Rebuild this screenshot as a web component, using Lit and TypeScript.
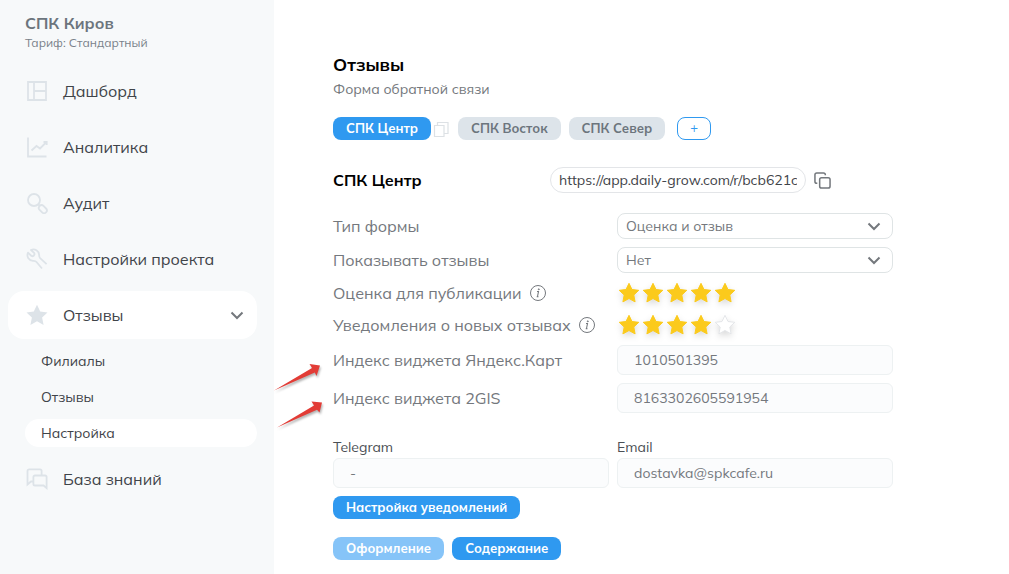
import { LitElement, html, css, svg } from "lit";
import { customElement, property, state } from "lit/decorators.js";
import { classMap } from "lit/directives/class-map.js";

const FONT = css`"Mulish", "Open Sans", "Noto Sans", sans-serif`;

const icons = {
  dashboard: svg`<path d="M2 2h18v18H2zM8 2v18M8 11h12"/>`,
  chart: svg`<path d="M2 1.500v19h18.500M5.500 14.500l5-4.500 3.500 2.500 6-6M17.500 6h3.200v3"/>`,
  audit: svg`<circle cx="8" cy="8" r="6"/><path d="M12.500 12.500l1.500 1.500"/><rect x="12.500" y="14.500" width="9" height="5.500" rx="2.700" transform="rotate(45 17 17)"/>`,
  wrench: svg`<path stroke-linejoin="round" d="M16 20.500l-5.500-6.500c-1-1.200-2-1-3.500-1.100C3 12.500.2 9 2 4.700L5.500 8c1.700.8 3.600-1.200 2.800-2.800L5 2c4-1.800 7.800 1 8.100 4.700.1 1.500 0 2.500 1 3.500l6.500 6"/>`,
  star: svg`<path class="solid" d="M11 .8l3.200 6.800 7.300.8-5.400 5.100 1.500 7.400-6.600-3.600-6.600 3.600 1.500-7.400L.5 8.400l7.300-.8z"/>`,
  chat: svg`<path d="M6.500 13.500H5l-3.500 3V3c0-1 .6-1.600 1.600-1.600H14c1 0 1.600.6 1.600 1.600v3.500M9 7.500h10c1 0 1.600.6 1.600 1.600v11l-3-2.600H9c-1 0-1.600-.6-1.600-1.600V9.100C7.400 8.100 8 7.500 9 7.500z"/>`,
};

const chevron = svg`<path d="M1.500 1.500L7 7l5.500-5.500"/>`;

const arrows = {
  yandex: "M1 30.500L39 8 36.500 4 47 5.500 43.500 16 41.800 12.500z",
  gis: "M4 29.500L41 7.500 38.500 3.500 49 4.500 46.500 14.500 44 11.800z",
};

@customElement("nav-item")
class NavItem extends LitElement {
  @property() icon: keyof typeof icons = "dashboard";
  @property() label = "";
  @property({ type: Boolean }) open = false;

  static styles = css`
    :host { display: block; font-family: ${FONT}; }
    .link {
      display: flex; align-items: center; gap: 15px; height: 48px;
      padding: 0 13px 0 18px; border-radius: 16px;
      color: #3f4449; font-size: 16px; text-decoration: none;
    }
    .open { background: #fff; }
    .label { flex: 1; }
    .icon { width: 22px; height: 22px; fill: none; stroke: #dde3e8; stroke-width: 1.8; }
    .solid { fill: #dde3e8; stroke: none; }
    .chevron { width: 14px; height: 9px; fill: none; stroke: #74787d; stroke-width: 2; }
  `;

  render() {
    return html`<a class=${classMap({ link: true, open: this.open })} href="#">
      <svg class="icon" viewBox="0 0 22 22" aria-hidden="true">${icons[this.icon]}</svg>
      <span class="label">${this.label}</span>
      ${this.open ? html`<svg class="chevron" viewBox="0 0 14 9" aria-hidden="true">${chevron}</svg>` : null}
    </a>`;
  }
}

@customElement("star-rating")
class StarRating extends LitElement {
  @property({ type: Number }) value = 0;
  @property() label = "";

  static styles = css`
    :host { display: block; }
    .stars { display: flex; border: 0; margin: 0; padding: 0; }
    .star { display: block; position: relative; width: 24px; height: 24px; cursor: pointer; }
    .radio { position: absolute; inset: 0; margin: 0; opacity: 0; }
    .shape { display: block; width: 24px; height: 24px; overflow: visible; fill: #fff; stroke: #e3e5e8; filter: drop-shadow(0 3px 3px rgb(0 0 0 / 14%)); }
    .on { fill: #fbca1c; stroke: #fbca1c; }
  `;

  render() {
    return html`<fieldset class="stars" aria-label=${this.label}>
      ${[1, 2, 3, 4, 5].map((n) => html`<label class="star">
        <input class="radio" type="radio" name="rate" aria-label=${n} .checked=${n === this.value} @change=${() => (this.value = n)}>
        <svg class=${classMap({ shape: true, on: n <= this.value })} viewBox="0 0 24 24" aria-hidden="true">
          <path stroke-linejoin="round" d="M12 2.300l3 6.200 6.800.8-5 4.700 1.300 6.900-6.100-3.400-6.100 3.400 1.300-6.900-5-4.700 6.800-.8z"/>
        </svg>
      </label>`)}
    </fieldset>`;
  }
}

@customElement("app-root")
class AppRoot extends LitElement {
  @state() private branch = "СПК Центр";

  static styles = css`
    :host { display: flex; min-height: 100vh; background: #fff; font-family: ${FONT}; color: #74787d; }
    * { box-sizing: border-box; }
    button, input, select { font-family: inherit; margin: 0; }
    h1, h2, p { margin: 0; }

    .sidebar { flex: 0 0 274px; padding: 13px 17px 16px 8px; background: #f7f9fa; }
    .account { padding-left: 17px; margin-bottom: 14px; }
    .account-name { font-size: 16px; line-height: 20px; font-weight: 700; color: #6c757d; }
    .account-plan { font-size: 12px; line-height: 20px; color: #7a828a; }
    .nav { display: grid; gap: 8px; }
    .subnav { display: grid; gap: 8px; padding-left: 17px; }
    .sublink { height: 28px; padding: 0 16px; border-radius: 14px; font-size: 14px; line-height: 28px; color: #3f4449; text-decoration: none; }
    .current { background: #fff; }

    .main { flex: 1; min-width: 0; padding: 53px 59px 15px; }
    .content { max-width: 560px; }
    .title { font-size: 18px; line-height: 24px; font-weight: 700; color: #000; }
    .subtitle { font-size: 14px; line-height: 24px; }

    .tabs { display: flex; align-items: center; gap: 8px; margin-top: 16px; }
    .tab-group { display: flex; align-items: center; gap: 2px; margin-right: 1px; }
    .button { height: 23px; padding: 0 13px; border: 0; border-radius: 8px; font-size: 13px; line-height: 23px; font-weight: 700; background: #2f99f0; color: #fff; white-space: nowrap; }
    .idle { background: #dde4ea; color: #6c757d; }
    .faded { background: #86c4f8; }
    .add { width: 34px; padding: 0; margin-left: 4px; border: 1px solid #2f99f0; background: #fff; color: #2f99f0; font-weight: 400; line-height: 21px; }
    .icon-button { display: block; padding: 0; border: 0; background: none; }
    .duplicate { display: block; width: 16px; height: 16px; fill: none; stroke: #dde1e5; stroke-width: 1.200; }
    .copy { display: block; width: 17px; height: 17px; fill: none; stroke: #74787d; stroke-width: 1.600; }

    .branch { display: flex; align-items: center; margin-top: 27px; }
    .branch-name { flex: 0 0 217px; font-size: 16px; line-height: 24px; font-weight: 700; color: #000; }
    .url { width: 256px; height: 26px; padding: 0 8px; border: 1px solid #e3e5e8; border-radius: 13px; font-size: 14px; color: #3f4449; margin-right: 8px; }

    .settings { display: grid; gap: 8px; margin-top: 20px; }
    .row { position: relative; display: grid; grid-template-columns: 1fr 276px; column-gap: 8px; align-items: center; }
    .label { display: flex; align-items: center; gap: 8px; font-size: 16px; line-height: 20px; white-space: nowrap; }
    .info { width: 16px; height: 16px; fill: none; stroke: #74787d; }
    .picker { display: grid; align-items: center; }
    .select { grid-area: 1 / 1; width: 100%; height: 26px; padding: 0 8px; border: 1px solid #dfe4e5; border-radius: 8px; appearance: none; background: #fff; font-size: 14px; color: #74787d; }
    .chevron { grid-area: 1 / 1; justify-self: end; margin-right: 12px; width: 14px; height: 9px; fill: none; stroke: #74787d; stroke-width: 2; pointer-events: none; }
    .field { width: 100%; height: 30px; padding: 0 16px; border: 1px solid #edf1f2; border-radius: 6px; background: #fbfcfd; font-size: 14px; color: #74787d; }
    .arrow { position: absolute; right: 100%; top: 50%; width: 60px; height: 40px; overflow: visible; fill: #e23c36; filter: drop-shadow(1px 2px 1px rgb(0 0 0 / 30%)); }

    .contacts { display: grid; grid-template-columns: 1fr 1fr; gap: 8px; margin-top: 24px; }
    .contact { display: grid; font-size: 14px; line-height: 21px; color: #4b5055; }
    .actions { display: flex; gap: 8px; margin-top: 8px; }
    .actions + .actions { margin-top: 18px; }
  `;

  private info = html`<svg class="info" viewBox="0 0 16 16" aria-hidden="true">
    <circle cx="8" cy="8" r="7.500"/><path d="M7 6.500h1.500L7.500 11.500M6.700 11.800h1.800" stroke-width="1.100"/><circle cx="8.800" cy="4.300" r=".5" fill="#74787d"/>
  </svg>`;

  private picker(id: string, label: string, options: string[]) {
    return html`<div class="row">
      <label class="label" for=${id}>${label}</label>
      <div class="picker">
        <select class="select" id=${id}>${options.map((o) => html`<option>${o}</option>`)}</select>
        <svg class="chevron" viewBox="0 0 14 9" aria-hidden="true">${chevron}</svg>
      </div>
    </div>`;
  }

  private rating(label: string, value: number) {
    return html`<div class="row">
      <div class="label">${label}${this.info}</div>
      <star-rating .label=${label} .value=${value}></star-rating>
    </div>`;
  }

  private widget(id: keyof typeof arrows, label: string, value: string) {
    return html`<div class="row">
      <svg class="arrow" viewBox="0 0 60 40" aria-hidden="true"><path d=${arrows[id]}/></svg>
      <label class="label" for=${id}>${label}</label>
      <input class="field" id=${id} .value=${value}>
    </div>`;
  }

  private tab(name: string) {
    return html`<button class=${classMap({ button: true, idle: name !== this.branch })} @click=${() => (this.branch = name)}>${name}</button>`;
  }

  render() {
    return html`
      <aside class="sidebar">
        <div class="account">
          <div class="account-name">СПК Киров</div>
          <div class="account-plan">Тариф: Стандартный</div>
        </div>
        <nav class="nav">
          <nav-item icon="dashboard" label="Дашборд"></nav-item>
          <nav-item icon="chart" label="Аналитика"></nav-item>
          <nav-item icon="audit" label="Аудит"></nav-item>
          <nav-item icon="wrench" label="Настройки проекта"></nav-item>
          <nav-item icon="star" label="Отзывы" open></nav-item>
          <div class="subnav">
            <a class="sublink" href="#">Филиалы</a>
            <a class="sublink" href="#">Отзывы</a>
            <a class="sublink current" href="#">Настройка</a>
          </div>
          <nav-item icon="chat" label="База знаний"></nav-item>
        </nav>
      </aside>
      <main class="main">
        <div class="content">
          <h1 class="title">Отзывы</h1>
          <p class="subtitle">Форма обратной связи</p>
          <div class="tabs">
            <div class="tab-group">
              ${this.tab("СПК Центр")}
              <button class="icon-button" aria-label="Дублировать">
                <svg class="duplicate" viewBox="0 0 16 16"><path d="M1.500 4.500h9.500v11H1.500zM4.500 4.500v-3h10.500v11h-4"/></svg>
              </button>
            </div>
            ${this.tab("СПК Восток")}
            ${this.tab("СПК Север")}
            <button class="button add" aria-label="Добавить">+</button>
          </div>
          <div class="branch">
            <h2 class="branch-name">${this.branch}</h2>
            <input class="url" aria-label="Ссылка" readonly value="https://app.daily-grow.com/r/bcb621c">
            <button class="icon-button" aria-label="Копировать">
              <svg class="copy" viewBox="0 0 18 18"><rect x="6" y="6" width="11" height="11" rx="2"/><path d="M3.500 12H3a2 2 0 0 1-2-2V3a2 2 0 0 1 2-2h7a2 2 0 0 1 2 2v.5"/></svg>
            </button>
          </div>
          <div class="settings">
            ${this.picker("type", "Тип формы", ["Оценка и отзыв"])}
            ${this.picker("show", "Показывать отзывы", ["Нет"])}
            ${this.rating("Оценка для публикации", 5)}
            ${this.rating("Уведомления о новых отзывах", 4)}
            ${this.widget("yandex", "Индекс виджета Яндекс.Карт", "1010501395")}
            ${this.widget("gis", "Индекс виджета 2GIS", "8163302605591954")}
          </div>
          <div class="contacts">
            <label class="contact">Telegram<input class="field" value="-"></label>
            <label class="contact">Email<input class="field" value="dostavka@spkcafe.ru"></label>
          </div>
          <div class="actions"><button class="button">Настройка уведомлений</button></div>
          <div class="actions">
            <button class="button faded">Оформление</button>
            <button class="button">Содержание</button>
          </div>
        </div>
      </main>`;
  }
}
